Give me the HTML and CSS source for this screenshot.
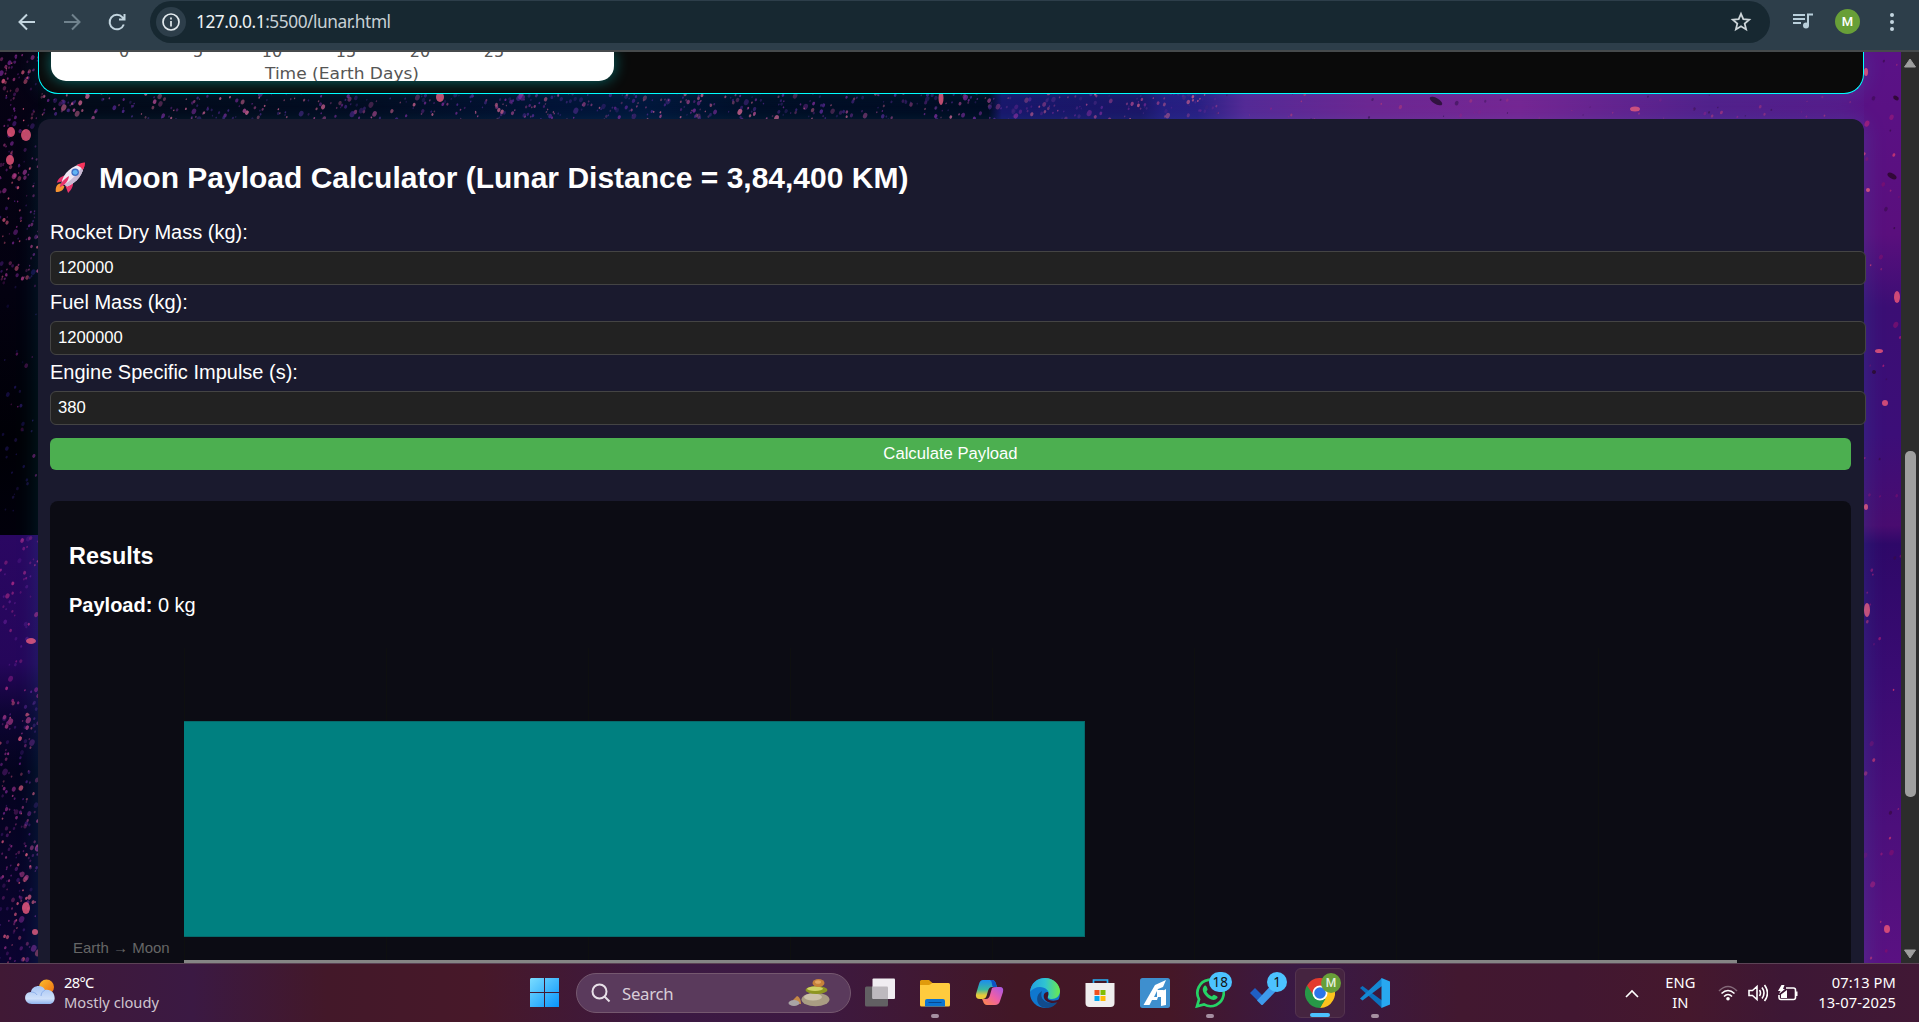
FILE: index.html
```html
<!DOCTYPE html>
<html lang="en">
<head>
<meta charset="utf-8">
<title>Moon Payload Calculator</title>
<link rel="stylesheet" href="styles.css">
</head>
<body>
<header class="toolbar">
  <svg class="nav back" viewBox="0 0 24 24"><path d="M20 12H5M12 4.500 4.500 12l7.500 7.500"/></svg>
  <svg class="nav forward" viewBox="0 0 24 24"><path d="M4 12h15M12 4.500l7.500 7.500-7.500 7.500"/></svg>
  <svg class="nav reload" viewBox="0 0 24 24"><path d="M18.800 14.500a7.300 7.300 0 1 1-1.300-7.200L19 9M19.500 4v5.500H14"/></svg>
  <div class="omnibox">
    <span class="info"><svg viewBox="0 0 20 20"><circle cx="10" cy="10" r="8"/><path d="M10 9v5.500M10 5.500v2"/></svg></span>
    <span class="url"><b>127.0.0.1</b>:5500/lunar.html</span>
    <svg class="star" viewBox="0 0 22 22"><path d="M11 2.800l2.300 5.400 5.900.5-4.500 3.900 1.400 5.800L11 15.300l-5.100 3.100 1.400-5.800-4.500-3.900 5.900-.5z"/></svg>
  </div>
  <svg class="media" viewBox="0 0 20 16"><path d="M0 2h12M0 6h12M0 10h8M15 12.500V1.500h5"/><circle cx="13" cy="12.500" r="3"/></svg>
  <span class="avatar">M</span>
  <svg class="dots" viewBox="0 0 6 20"><circle cx="3" cy="3" r="2"/><circle cx="3" cy="10" r="2"/><circle cx="3" cy="17" r="2"/></svg>
</header>

<main class="viewport">
  <div class="page">
    <svg class="sky" id="sky" width="1901" height="911"></svg>
    <section class="card graph-card">
      <svg class="graph" width="563" height="29" viewBox="0 0 563 29">
        <g class="ticks"><text x="73" y="5">0</text><text x="147" y="5">5</text><text x="221" y="5">10</text><text x="295" y="5">15</text><text x="369" y="5">20</text><text x="443" y="5">25</text></g>
        <text class="axis-name" x="214" y="27" textLength="154" lengthAdjust="spacingAndGlyphs">Time (Earth Days)</text>
      </svg>
    </section>
    <section class="card calculator">
      <h2><svg class="rocket" viewBox="0 0 34 34">
        <path fill="#f59331" d="M2 32c-1-6 2-10 6-9l3 3c-1 4-4 6-9 6z"/>
        <path fill="#e8336b" d="M15 14C8 14 5 17 3 22l9-2zM20 20c1 5-1 9-5 13l-3-8z"/>
        <path fill="#efe6f2" d="M8 22C10 12 18 4 32 1c-1 13-7 20-18 25z"/>
        <path fill="#c9b9d4" d="M11 24C20 18 27 11 32 1c-1 13-7 20-18 25z"/>
        <path fill="#f8345c" d="M24 3.500Q30 0 33 .5q.5 4-2.500 8-1.500-3-6.500-5z"/>
        <path fill="#e8336b" d="M6 27c1-5 4-8 10-12-1 6-4 9-10 12z"/>
        <circle cx="22.500" cy="11" r="4" fill="#3f6fc4"/><circle cx="22.500" cy="11" r="2.600" fill="#61b4f4"/>
      </svg><span>Moon Payload Calculator (Lunar Distance = 3,84,400 KM)</span></h2>
      <label for="dry">Rocket Dry Mass (kg):</label>
      <input id="dry" value="120000">
      <label for="fuel">Fuel Mass (kg):</label>
      <input id="fuel" value="1200000">
      <label for="isp">Engine Specific Impulse (s):</label>
      <input id="isp" value="380">
      <button type="button">Calculate Payload</button>
      <div class="results">
        <h3>Results</h3>
        <p><strong>Payload:</strong> 0 kg</p>
        <div class="chart">
          <span class="category">Earth → Moon</span>
          <div class="plot"><div class="bar"></div></div>
        </div>
      </div>
    </section>
  </div>
  <div class="scrollbar">
    <svg viewBox="0 0 14 10"><path d="M7 1 12.500 9h-11z"/></svg>
    <div class="thumb"></div>
    <svg viewBox="0 0 14 10"><path d="M7 9 1.500 1h11z"/></svg>
  </div>
</main>

<footer class="taskbar">
  <div class="weather">
    <svg viewBox="0 0 30 26"><defs>
      <linearGradient id="sun" x1="0" y1="0" x2="1" y2="1"><stop stop-color="#fbbf2c"/><stop offset="1" stop-color="#ee6a10"/></linearGradient>
      <linearGradient id="cloud" x1="0" y1="0" x2="0" y2="1"><stop stop-color="#a5c4f4"/><stop offset=".7" stop-color="#cfe0fa"/><stop offset="1" stop-color="#8fb2ee"/></linearGradient></defs>
      <circle cx="21.500" cy="8" r="7.500" fill="url(#sun)"/>
      <path fill="url(#cloud)" d="M7 25c-9 0-9-12-1-12 1-7 12-8 14-2 11-2 13 14 4 14z"/>
      <path fill="none" stroke="#8db0ec" d="M6 13c3 0 5 1 6 3M16 17c0-3 2-5 4-6"/>
    </svg>
    <div><span class="temp">28°C</span><span class="sky-state">Mostly cloudy</span></div>
  </div>
  <div class="apps">
    <div class="app start"><svg viewBox="0 0 30 30"><defs><linearGradient id="win" x1="0" y1="0" x2="1" y2="1"><stop stop-color="#7adcff"/><stop offset="1" stop-color="#0894fb"/></linearGradient></defs><path fill="url(#win)" d="M1 0h13v14H0V1zM15 0h14v14H15zM0 15h14v14H0zM15 15h14v14H15z"/></svg></div>
    <div class="search">
      <svg class="lens" viewBox="0 0 20 20"><circle cx="8.500" cy="8.500" r="7"/><path d="M13.500 13.500l5 5"/></svg>
      <span>Search</span>
      <svg class="stones" viewBox="0 0 42 28">
        <path fill="#c58846" d="M5 21l4-4c3 1 4 5 4 8H7z"/><ellipse cx="6" cy="24" rx="5.500" ry="3" fill="#a8a4a5"/>
        <ellipse cx="27.500" cy="20.500" rx="14" ry="6.800" fill="#a99d83"/><ellipse cx="25" cy="18" rx="9" ry="3.500" fill="#cbc0aa"/>
        <ellipse cx="28.500" cy="11" rx="11" ry="4" fill="#8d9521"/><ellipse cx="27" cy="9.800" rx="8" ry="2.200" fill="#cfd166"/>
        <ellipse cx="30.500" cy="4" rx="6" ry="4" fill="#c6813a"/><ellipse cx="30" cy="3" rx="3" ry="1.800" fill="#e2a663"/>
      </svg>
    </div>
    <div class="app"><svg viewBox="0 0 30 30"><rect y="8.500" width="23" height="20" rx="1.500" fill="#626063"/><rect x="7.500" y=".5" width="22.500" height="20.500" rx="1" fill="#f0edf1"/><path fill="#bdb9be" d="M7.500 8.500H22a1 1 0 0 1 1 1V21H8.500a1 1 0 0 1-1-1z"/></svg></div>
    <div class="app open"><svg viewBox="0 0 30 30"><path fill="#e09b0c" d="M0 3.500Q0 2 1.500 2H9l4 3.500V10H0z"/><rect y="5" width="30" height="23.500" rx="1.500" fill="#ffcb3e"/><path fill="#e09b0c" d="M0 7V3h9l3 2.500L9 7z"/><path fill="#0b74d1" d="M5 28.500V23q0-2 2-2h16q2 0 2 2v5.500z"/><path stroke="#07488e" d="M8.500 24.500h13"/></svg></div>
    <div class="app"><svg viewBox="0 0 30 30"><defs>
      <linearGradient id="copA" x1="0" y1="0" x2="0" y2="1"><stop stop-color="#1b8cf0"/><stop offset=".5" stop-color="#3bb8a0"/><stop offset=".8" stop-color="#e8c93a"/></linearGradient>
      <linearGradient id="copB" x1="1" y1="0" x2="0" y2="1"><stop stop-color="#a657e8"/><stop offset=".5" stop-color="#ee5fa6"/><stop offset="1" stop-color="#fd8c42"/></linearGradient></defs>
      <path fill="url(#copA)" d="M8 2h9q3 0 4 4l1 3h-5q-3 0-4 4l-1.500 5q-1 3-4 3H5q-5 0-4-5L4 6q1-4 4-4z"/>
      <path fill="url(#copB)" d="M22 9h3q4 0 3 5l-3 9q-1 4-5 4h-8q-3 0-4-4l-1-2h4q3 0 4-4l2-7q1-1 5-1z"/>
      <path fill="#0d53c4" d="M15 2h2q3 0 4 4l1 3h-4q-1-1-1-3 0-3-2-4z"/></svg></div>
    <div class="app"><svg viewBox="0 0 30 30"><defs>
      <linearGradient id="edgA"><stop stop-color="#239fe0"/><stop offset=".5" stop-color="#2fc3d3"/><stop offset="1" stop-color="#6bea4c"/></linearGradient></defs>
      <circle cx="15" cy="15" r="15" fill="#0f77cf"/>
      <path fill="url(#edgA)" d="M0 14C1 5 7 0 15 0c9 0 15 7 15 13 0 5-4 8-8 8-3 0-5-1-4-3 3-5-3-9-8-9-4 0-8 2-10 5z"/>
      <path fill="#114b8c" d="M12 13c-3 8 4 12 10 12 3 0 5-1 6-2-4 7-10 8-16 6-6-3-7-12 0-16z"/>
      <path fill="#431329" d="M18 14c1 4-1 5 0 7 2 2 7 2.500 12 0v2l-2 1c-5 2-12 1-14-4-1-4 1-6 4-6z"/></svg></div>
    <div class="app"><svg viewBox="0 0 30 30"><path fill="none" stroke="#29b0f4" stroke-width="1.700" d="M8.500 6V2h14v4"/><path fill="#efeeee" d="M.5 5h29v20q0 4-4 4h-21q-4 0-4-4z"/><path fill="#f1511f" d="M9.500 12h5v5h-5z"/><path fill="#80bd05" d="M15.500 12h5v5h-5z"/><path fill="#03a5ef" d="M9.500 18h5v5h-5z"/><path fill="#ffba07" d="M15.500 18h5v5h-5z"/></svg></div>
    <div class="app"><svg viewBox="0 0 30 30"><rect width="30" height="30" rx="2.500" fill="#3e8fce"/><path fill="#fff" d="M3.500 27 15 7l11-5-3 7-5 2-4 8h4l-1 3h-5l-2.500 5zM21 14l5-3v16l-5 1z"/><path fill="#fff" d="m17 12 7 0-2 4 1 3-6 0z"/></svg></div>
    <div class="app open"><svg viewBox="0 0 30 30"><path fill="none" stroke="#25d366" stroke-width="2.700" d="M2 28.300l2-7A13.200 13.200 0 1 1 9 26.400z"/><path fill="#25d366" d="M8.500 9c2-3 3-1 4 2 .5 1-1 2-1 2.500 1 2 3 4 5.500 5 1-1 1.500-2 2.500-1.500 5 2 3 3 1 4.500C15 24 5 14 8.500 9z"/></svg><i class="count">18</i></div>
    <div class="app"><svg viewBox="0 0 30 30"><path fill="#1f5fc4" d="m0 15 5-5 8 8-4 6z"/><path fill="#3e9bed" d="m7 22.500 4 4q1 1 2 0L29 10l-5-6z"/></svg><i class="count">1</i></div>
    <div class="app active"><svg viewBox="0 0 30 30"><path fill="#e33b2e" d="M2 7.500a15 15 0 0 1 26 0L15 15z"/><path fill="#fcc31e" d="M28 7.500A15 15 0 0 1 15 30l6-12-5-9z"/><path fill="#279847" d="M2 7.500A15 15 0 0 0 15 30l5.500-9L15 15z"/><path fill="#e33b2e" d="M2 7.500 9 18l6-10h13z"/><circle cx="15" cy="15" r="7.500" fill="#fff"/><circle cx="15" cy="15" r="5.800" fill="#2c75ea"/></svg><i class="count profile">M</i></div>
    <div class="app open"><svg viewBox="0 0 30 30"><path fill="#0b70bd" d="m0 10 2.500-2L22 22.500V30z"/><path fill="#1489d4" d="m0 20.500 2.500 2L22 8V0z"/><path fill="#28a8f0" d="M21.500 0 30 3.500v23L21.500 30z"/></svg></div>
  </div>
  <div class="tray">
    <svg class="chevron" viewBox="0 0 14 9"><path d="m1 8 6-6 6 6"/></svg>
    <span class="lang">ENG<br>IN</span>
    <svg class="wifi" viewBox="0 0 20 16"><path opacity=".35" d="M1 6q9-9 18 0"/><path d="M3.500 8.500q6.500-6 13 0M6 11.500q4-4 8 0"/><circle cx="10" cy="13.800" r="1.800"/></svg>
    <svg class="volume" viewBox="0 0 20 18"><path d="M1 6.500h3.500l4.500-4v13l-4.500-4H1zM11.500 6q2 3 0 6M14 3.500q4 5.500 0 11M16.500 1q6 8 0 16"/></svg>
    <svg class="battery" viewBox="0 0 20 16"><path d="M8 3h7.500q2 0 2 2v7.500q0 2-2 2H3q-2 0-2-2V10M18.700 6.500v4.500"/><path class="solid" d="M3.500 0 0 6h2.500L1 9l6-5H5L6.500 0zM3 13V9.500L9 5v8z"/></svg>
    <span class="clock">07:13 PM<br>13-07-2025</span>
  </div>
</footer>
<script src="sky.js"></script>
</body>
</html>
```
FILE: styles.css
```css
* { box-sizing: border-box; }
body { margin: 0; height: 1022px; overflow: hidden; display: flex; flex-direction: column; font-family: "Liberation Sans", Arial, sans-serif; color: #fff; }

.toolbar { height: 52px; flex: none; display: flex; align-items: center; padding: 0 20px 7px 15px; background: #2d3e4a; border-bottom: 2px solid #464a4c; font-family: "Noto Sans", sans-serif; }
.nav { width: 24px; height: 24px; fill: none; stroke: #c3d5df; stroke-width: 2; }
.back { margin-right: 21px; }
.forward { opacity: .45; margin-right: 21px; }
.omnibox { width: 1620px; height: 42px; margin-left: 21px; border-radius: 21px; background: #172831; display: flex; align-items: center; padding: 0 18px 0 6px; }
.info { width: 30px; height: 30px; border-radius: 50%; background: #2d3e4a; display: grid; place-items: center; }
.info svg { width: 20px; height: 20px; fill: none; stroke: #e3eaee; stroke-width: 1.700; }
.url { margin-left: 10px; flex: 1; font-size: 17.300px; letter-spacing: -.45px; color: #c7d0d5; }
.url b { font-weight: 400; color: #eef2f4; }
.star { width: 22px; height: 22px; fill: none; stroke: #cdd5d9; stroke-width: 1.800; }
.media { width: 20px; height: 16px; margin: -2px 0 0 23px; fill: none; stroke: #b9cfdb; stroke-width: 2; }
.media circle { fill: #b9cfdb; stroke: none; }
.avatar { width: 25px; height: 25px; margin-left: 22px; border-radius: 50%; background: #689f38; display: grid; place-items: center; font: 500 13px Roboto, sans-serif; }
.dots { width: 6px; height: 20px; margin-left: 29px; fill: #c3d5df; }

.viewport { flex: 1; min-height: 0; display: flex; }
.page { flex: 1; position: relative; overflow: hidden; padding: 0 37px 0 38px; background: #06051c; }
.sky { position: absolute; inset: 0; }
.card { position: relative; width: 1826px; box-shadow: 0 0 25px rgba(0, 255, 255, .13); }
.graph-card { z-index: 1; height: 42px; padding-left: 12px; background: #0a0a0a; border: 1px solid #0ff; border-top: 0; border-radius: 0 0 20px 20px; }
.graph { display: block; background: #fff; border-radius: 0 0 15px 15px; box-shadow: 0 0 15px rgba(0, 255, 255, .4); font-family: "DejaVu Sans", sans-serif; font-size: 16px; fill: #555; }
.ticks { text-anchor: middle; }
.calculator { height: 860px; margin-top: 25px; padding: 12px 13px 12px 12px; background: #1a1a2e; border-radius: 12px; }
h2 { margin: 26px 0 22px; height: 42px; display: flex; align-items: center; font-size: 30px; line-height: 42px; }
.rocket { width: 32px; height: 32px; margin: 0 13px 0 4px; }
h2 span { flex: none; }
label { display: block; height: 30px; line-height: 23px; font-size: 20px; }
input { display: block; width: 1816px; height: 34px; margin: 0 0 6px; padding: 0 7px; background: #222; border: 1px solid #444; border-radius: 6px; color: #fff; font: 16.667px "Liberation Sans", Arial, sans-serif; }
button { display: block; width: 100%; height: 32px; margin: 13px 0 31px; padding: 0; border: 0; border-radius: 6px; background: #4caf50; color: #fff; font: 16.667px "Liberation Sans", Arial, sans-serif; }
.results { height: 500px; padding: 42px 18px 0 19px; border-radius: 8px; background: #0c0c14; }
h3 { margin: 0; font-size: 23.400px; line-height: 26px; }
p { margin: 24px 0 0; font-size: 20px; line-height: 24px; }
.chart { display: flex; height: 315px; margin-top: 31px; }
.category { width: 115px; padding-left: 4px; align-self: flex-end; margin-bottom: 5px; font-size: 15px; color: #666; white-space: nowrap; line-height: 20px; }
.plot { width: 1553px; border-bottom: 3px solid #858585; padding-top: 73px; background: repeating-linear-gradient(90deg, #0e0f10 0 1px, transparent 1px 202px); }
.bar { width: 901px; height: 216px; background: #008080; border: 1px solid #056a6b; border-left: 0; }

.scrollbar { width: 18px; background: #2c2c2c; display: flex; flex-direction: column; align-items: center; padding: 6px 0 4px; }
.scrollbar svg { width: 14px; height: 10px; fill: #9f9f9f; stroke: #9f9f9f; stroke-linejoin: round; }
.thumb { width: 11px; height: 346px; margin: 383px 0 auto; border-radius: 5px; background: #9f9f9f; }

.taskbar { flex: none; height: 59px; display: flex; align-items: center; padding: 0 23px 0 25px; border-top: 1px solid #5c4356; font-family: "Noto Sans", sans-serif; background: linear-gradient(90deg, #401935 0, #3b1943 10%, #431829 17%, #471829 25%, #3b1943 35%, #3d1942 42%, #421726 53%, #451727 61%, #391946 68%, #421830 76%, #421731 82%, #45182d 88%, #3d1735 93%, #411835 100%); }
.weather { width: 505px; display: flex; gap: 9px; align-items: center; font-size: 14.700px; line-height: 20px; margin-top: -2px; }
.weather svg { width: 30px; height: 26px; }
.weather span { display: block; }
.temp { letter-spacing: -.7px; }
.sky-state { color: #cfc5cf; }
.apps { display: flex; align-items: center; height: 58px; gap: 5px; }
.app { width: 50px; height: 50px; position: relative; display: grid; place-items: center; border-radius: 6px; }
.app svg { width: 30px; height: 30px; }
.start { width: 30px; margin-right: 11px; }
.search { width: 275px; height: 40px; margin-right: -1px; border-radius: 20px; background: #5a3a5c; border: 1px solid #75586f; display: flex; align-items: center; padding: 0 20px 0 14px; color: #d8cdd8; font-size: 16.800px; }
.search span { margin-left: 11px; flex: 1; letter-spacing: -.3px; }
.lens { width: 20px; height: 20px; fill: none; stroke: #e8e0e8; stroke-width: 2; }
.stones { width: 42px; height: 28px; }
.open::after, .active::after { content: ""; position: absolute; bottom: 0; left: 21px; width: 8px; height: 4px; border-radius: 2px; background: #a68fa1; }
.active { background: #452440; border: 1px solid #54344f; }
.active::after { left: 14px; width: 20px; background: #4cc2ff; }
.count { position: absolute; right: 3px; top: 4px; min-width: 20px; height: 20px; padding: 0 4px; border-radius: 10px; background: #4cc2ff; color: #111; font: 13.500px/20px "Noto Sans", sans-serif; text-align: center; }
.profile { background: #689f38; color: #e4eedc; padding: 0; font: 500 12px/20px Roboto, sans-serif; }
.tray { margin-left: auto; display: flex; align-items: center; font-size: 14.700px; line-height: 20px; }
.tray svg { fill: none; stroke: #fff; stroke-width: 1.600; }
.chevron { width: 14px; height: 9px; margin-right: 26px; }
.lang, .clock { margin-top: -2px; }
.lang { text-align: center; margin-right: 23px; }
.wifi { width: 20px; height: 16px; margin-right: 10px; }
.volume { width: 20px; height: 18px; margin-right: 10px; }
.battery { width: 20px; height: 16px; margin-right: 20px; }
.wifi circle, .battery .solid { fill: #fff; stroke: none; }
.clock { text-align: right; letter-spacing: .1px; white-space: nowrap; }
```
FILE: sky.js
```js
// Draws the nebula behind the cards: colour bands first, then scattered dust.
(function () {
  const sky = document.getElementById("sky");
  const ns = "http://www.w3.org/2000/svg";
  let seed = 41;
  const rnd = () => (seed = (seed * 16807) % 2147483647) / 2147483647;
  const add = (name, attrs, parent) => {
    const el = document.createElementNS(ns, name);
    for (const key in attrs) el.setAttribute(key, attrs[key]);
    return (parent || sky).appendChild(el);
  };
  const band = (id, x, y, w, h, stops, vertical) => {
    const g = add("linearGradient", vertical ? { id, x1: 0, y1: 0, x2: 0, y2: 1 } : { id });
    stops.forEach(([offset, color]) => add("stop", { offset, "stop-color": color }, g));
    add("rect", { x, y, width: w, height: h, fill: `url(#${id})` });
  };
  band("strip", 0, 0, 1901, 80, [[0, "#04020f"], [.2, "#04061c"], [.29, "#030c30"], [.34, "#031036"], [.4, "#02071f"], [.52, "#02051c"], [.527, "#1a1067"], [.6, "#1d0f62"], [.612, "#27177c"], [.63, "#2b187f"], [.655, "#582393"], [.72, "#70208f"], [.8, "#791f90"], [.9, "#541a88"], [1, "#5b1387"]]);
  band("leftTop", 0, 0, 38, 483, [[0, "#060214"], [.5, "#030110"], [.8, "#000006"], [1, "#01000b"]], true);
  band("leftLow", 0, 483, 38, 428, [[0, "#2a0762"], [.3, "#25065a"], [.42, "#0d0433"], [.55, "#04031e"], [1, "#0b0330"]], true);
  band("right", 1864, 0, 37, 911, [[0, "#5a1287"], [.2, "#5a0f7d"], [.28, "#3b0e74"], [.42, "#3c0e78"], [.52, "#490c70"], [.54, "#2e0868"], [.68, "#390b72"], [.85, "#4c0f7b"], [1, "#5a1182"]], true);
  const dust = (n, x, y, w, h, colors, size) => {
    for (let i = 0; i < n; i++) {
      const r = size * (.45 + rnd() * rnd() * 1.3);
      const cx = x + rnd() * w, cy = y + rnd() * h;
      add("ellipse", { cx, cy, rx: r * .85, ry: r * 1.15, transform: `rotate(25 ${cx} ${cy})`, fill: colors[Math.floor(rnd() * colors.length)], opacity: .35 + rnd() * .5 });
    }
  };
  const pinks = ["#b13b86", "#6a2180", "#8a2a80", "#4a1c78", "#e25a80"];
  dust(170, 0, 0, 38, 230, pinks, 1.7);
  dust(40, 0, 220, 38, 260, ["#2a1a66", "#6a1868", "#1c1256"], 1.7);
  dust(55, 0, 485, 38, 165, ["#8c1c86", "#b02c88", "#5a1a8a"], 1.9);
  dust(190, 0, 650, 38, 261, pinks, 1.9);
  dust(620, 38, 40, 1180, 28, ["#7a2290", "#b04088", "#46207a", "#d05a88", "#58208c"], 1.7);
  dust(60, 1218, 40, 646, 28, ["#8c1c86", "#3d0d50", "#b03078"], 1.3);
  dust(50, 1864, 0, 37, 911, ["#b01c78", "#7c0f70", "#380a48", "#d83a70"], 2);
  [[11, 80, 4, 5], [26, 83, 5, 6], [10, 108, 4, 5], [31, 589, 5, 3], [26, 856, 4, 6], [35, 880, 3, 3], [440, 45, 4, 5], [941, 46, 2.500, 7], [1635, 57, 5, 2.500], [1866, 20, 2, 4], [1867, 558, 3, 7], [1887, 877, 3, 4], [1897, 245, 3, 6], [1885, 351, 3, 3], [1868, 138, 2, 2], [1866, 455, 2, 3], [1879, 299, 4, 2]]
    .forEach(([cx, cy, rx, ry]) => add("ellipse", { cx, cy, rx, ry, fill: "#e75378", opacity: .85 }));
  [[1892, 124, 5, 2.500], [1436, 49, 7, 3], [1896, 46, 3, 2], [1874, 320, 2, 2]]
    .forEach(([cx, cy, rx, ry]) => add("ellipse", { cx, cy, rx, ry, transform: `rotate(30 ${cx} ${cy})`, fill: "#2c0830", opacity: .9 }));
})();
```
